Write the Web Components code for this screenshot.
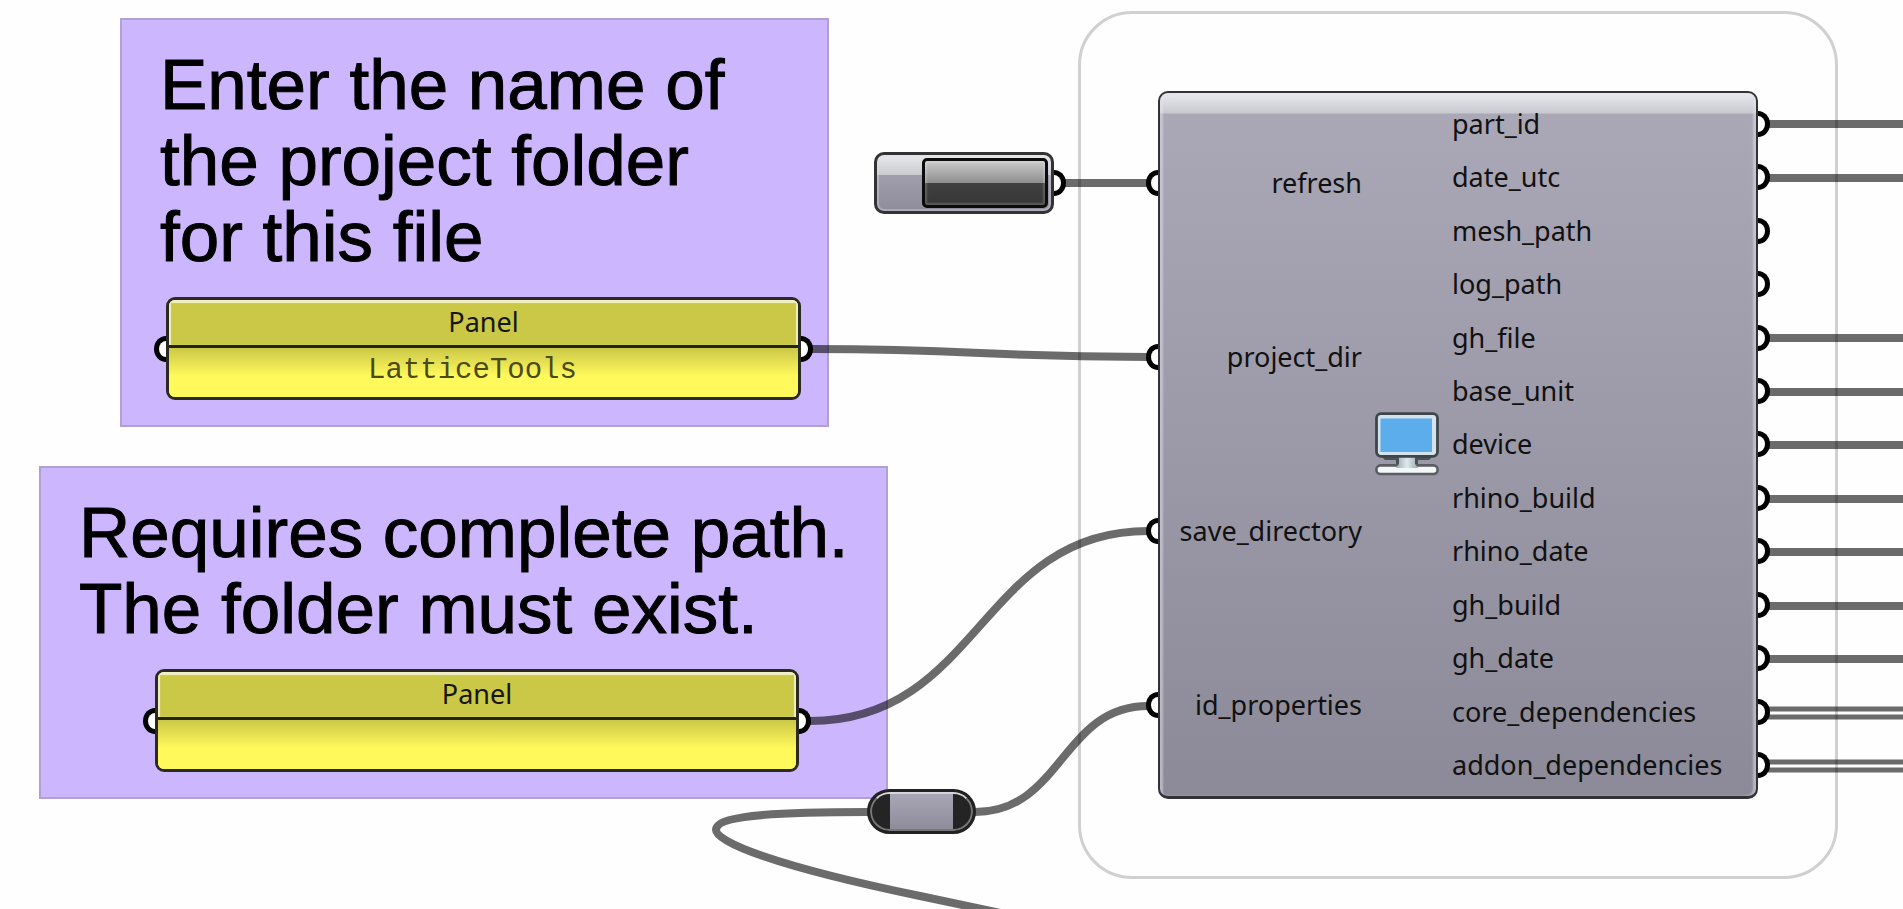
<!DOCTYPE html>
<html lang="en">
<head>
<meta charset="utf-8">
<title>Node canvas</title>
<style>
  html, body { margin: 0; height: 100%; }
  body { background: #fefefe; color: #000; font-family: "Noto Sans", "Open Sans", sans-serif; font-size: 27px; line-height: 36px; }
</style>
</head>
<body>
<gh-canvas>
  <gh-frame style="left:1078px;top:11px"></gh-frame>
  <gh-group style="left:120px;top:18px;width:709px;--indent:6px;--inset:26px">
    <span slot="note">Enter the name of<br>the project folder<br>for this file</span>
    <gh-panel name="Panel">LatticeTools</gh-panel>
  </gh-group>
  <gh-group style="left:39px;top:466px;width:849px;--indent:76px;--inset:87px">
    <span slot="note">Requires complete path.<br>The folder must exist.</span>
    <gh-panel name="Panel"></gh-panel>
  </gh-group>
  <gh-wires></gh-wires>
  <gh-button style="left:874px;top:152px"></gh-button>
  <gh-relay style="left:867px;top:789px"></gh-relay>
  <gh-component style="left:1158px;top:91px"
    inputs="refresh project_dir save_directory id_properties"
    outputs="part_id date_utc mesh_path log_path gh_file base_unit device rhino_build rhino_date gh_build gh_date core_dependencies addon_dependencies"></gh-component>
</gh-canvas>

<script>
  const define = (name, html, setup) => {
    const template = document.createElement('template');
    template.innerHTML = html;
    customElements.define(name, class extends HTMLElement {
      constructor() {
        super();
        this.attachShadow({ mode: 'open' }).append(template.content.cloneNode(true));
      }
      connectedCallback() {
        if (setup && !this.ready) { this.ready = true; setup(this, this.shadowRoot); }
      }
    });
  };

  /* Free canvas: each child node carries its own place. */
  define('gh-canvas', `
    <style>
      :host { display: block; position: relative; min-height: 100%; overflow: hidden; }
      ::slotted(*) { position: absolute; box-sizing: border-box; }
    </style>
    <main><slot></slot></main>`);

  /* Half-round connector on the edge of a node; --edge is the node's border width. */
  define('gh-grip', `
    <style>
      :host { display: block; position: absolute; box-sizing: border-box; width: 12px; height: 26px; top: calc(50% - 13px);
        border: 5px solid #000; background: #fff; }
      :host([side="in"]) { right: calc(100% + var(--edge, 0px)); border-right: 0; border-radius: 12px 0 0 12px / 13px 0 0 13px; }
      :host([side="out"]) { left: calc(100% + var(--edge, 0px)); border-left: 0; border-radius: 0 12px 12px 0 / 0 13px 13px 0; }
    </style>`);

  define('gh-frame', `
    <style>
      :host { display: block; width: 760px; height: 868px; border: 3px solid #d0d0d0; border-radius: 54px; }
    </style>`);

  define('gh-group', `
    <style>
      :host { display: flex; flex-direction: column; gap: 22px; padding: 27px 0 25px 38px;
        background: #ccb7ff; border: 2px solid #b0a0d4; }
      h2 { margin: 0; font: 400 71px/76px "Liberation Sans", Arial, sans-serif; white-space: nowrap; -webkit-text-stroke: 1px #000; }
      ::slotted(gh-panel) { margin: 0 var(--inset) 0 var(--indent); }
    </style>
    <h2><slot name="note"></slot></h2>
    <slot></slot>`);

  define('gh-panel', `
    <style>
      :host { display: block; position: relative; }
      section { display: grid; grid-template-rows: 48px 49px; border: 3px solid #2b2a20; border-radius: 9px;
        background: #fff95b; overflow: hidden; }
      header { text-align: center; line-height: 44px; color: #16160c; background: #cbc848; border-bottom: 3px solid #26240f;
        box-shadow: inset 2px 3px 1px #f0efc9, inset -2px 0 1px #f0efc9; }
      .text { font: 29px/46px "Liberation Mono", "Courier New", monospace; color: #4d4a1a; text-align: center;
        padding-right: 22px; background: linear-gradient(#cbc848, #fff95b 28px); }
    </style>
    <gh-grip side="in"></gh-grip><gh-grip side="out"></gh-grip>
    <section><header></header><div class="text"><slot></slot></div></section>`,
    (el, root) => { root.querySelector('header').textContent = el.getAttribute('name'); });

  define('gh-button', `
    <style>
      :host { display: block; width: 180px; height: 62px; }
      .body { display: flex; justify-content: flex-end; box-sizing: border-box; height: 100%; padding: 3px;
        border: 3px solid #333; border-radius: 10px; box-shadow: inset 0 0 0 2px #dcdce260;
        background: linear-gradient(#e9e9ec, #c9cacf 20px, #a09eac 20px, #8f8d9b); }
      button { box-sizing: border-box; width: 126px; padding: 0; border: 3px solid #0c0c0c; border-radius: 5px;
        box-shadow: inset 0 0 2px 2px #ffffff30;
        background: linear-gradient(#cacaca, #8e8e8e 22px, #404040 22px, #363636); }
    </style>
    <div class="body"><button type="button" aria-label="Refresh"></button></div>
    <gh-grip side="out"></gh-grip>`);

  define('gh-relay', `
    <style>
      :host { display: block; width: 109px; height: 45px; border: 3px solid #222; border-radius: 23px; overflow: hidden;
        background: linear-gradient(90deg, #242424 20px, #0000 20px, #0000 83px, #242424 83px), linear-gradient(#aaa8b6, #8d8b99); }
      div { box-sizing: border-box; height: 100%; border: 2px solid #777; border-top-color: #d4d4da; border-radius: 20px; }
    </style>
    <div></div>`);

  define('gh-monitor-icon', `
    <style>:host { display: block; width: 64px; height: 64px; } svg { display: block; }</style>
    <svg width="64" height="64" viewBox="0 0 64 64" aria-hidden="true">
      <defs><linearGradient id="neck" x2="1"><stop stop-color="#9caab2"/><stop offset=".5" stop-color="#dde9ef"/><stop offset="1" stop-color="#9caab2"/></linearGradient></defs>
      <path d="M5 43H59L54 48H43V55H21V48H10Z" fill="#4b5258"/>
      <rect x="1.4" y="53.4" width="61.2" height="8.6" rx="4" fill="#f4f7f8" stroke="#5a5e62" stroke-width="2.6"/>
      <path d="M24 44H40V52L43 56H21L24 52Z" fill="url(#neck)"/>
      <rect x="1.5" y="1.7" width="61" height="42.6" rx="4.5" fill="#d3e2eb" stroke="#3f464b" stroke-width="2.8"/>
      <rect x="5.5" y="6.5" width="51.5" height="33.5" fill="#5badec"/>
    </svg>`);

  define('gh-component', `
    <style>
      :host { --edge: 2px; display: grid; grid-template-columns: 202px 64px 1fr; column-gap: 13px; width: 600px; height: 708px;
        padding: 3px 0 4px; border: 2px solid #333236; border-bottom-width: 3px; border-radius: 10px;
        box-shadow: inset 3px 3px 2px #e4e4ea80, inset -3px 0 2px #e4e4ea80;
        background: linear-gradient(#e9e9ee, #c9cad0 20px, #aaa8b7 21px, #8c8a98); color: #111; }
      ul { display: grid; grid-auto-rows: 1fr; margin: 0; padding: 0; list-style: none; }
      li { display: flex; align-items: center; position: relative; white-space: nowrap; }
      .in li { justify-content: flex-end; }
      .out { padding-top: 1px; }
      gh-monitor-icon { align-self: center; }
    </style>
    <ul class="in"></ul><gh-monitor-icon></gh-monitor-icon><ul class="out"></ul>`,
    (el, root) => {
      for (const side of ['in', 'out']) {
        const list = root.querySelector('.' + side);
        for (const name of el.getAttribute(side + 'puts').split(' ')) {
          const item = document.createElement('li');
          const grip = document.createElement('gh-grip');
          grip.setAttribute('side', side);
          item.append(name, grip);
          list.append(item);
        }
      }
    });

  define('gh-wires', `
    <style>
      :host { display: block; inset: 0; pointer-events: none; }
      svg { display: block; width: 100%; height: 100%; fill: none; stroke: #000; stroke-opacity: .58; stroke-width: 8px; }
      .tree line { stroke-width: 5px; }
    </style>
    <svg aria-hidden="true">
      <path d="M1064 183H1148"/>
      <path d="M812 349C980 349 980 357 1148 357"/>
      <path d="M810 721C980 721 980 531 1148 531"/>
      <path d="M975 812C1062 812 1062 706 1148 706"/>
      <path d="M868 812C790 812 716 814 716 830C716 842 775 866 920 896L1010 915"/>
      <g class="item"></g><g class="tree"></g>
    </svg>`,
    (el, root) => {
      const draw = (group, ys) => {
        for (const y of ys) {
          const line = document.createElementNS('http://www.w3.org/2000/svg', 'line');
          line.setAttribute('x1', 1768); line.setAttribute('x2', '100%');
          line.setAttribute('y1', y); line.setAttribute('y2', y);
          root.querySelector(group).append(line);
        }
      };
      draw('.item', [124, 178, 338, 392, 445, 499, 552, 606, 659]);
      draw('.tree', [709, 717, 762, 770]);
    });
</script>
</body>
</html>
